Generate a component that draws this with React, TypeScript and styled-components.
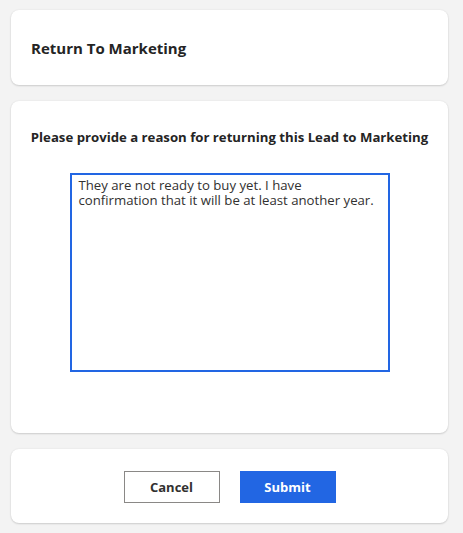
import styled, { createGlobalStyle } from "styled-components";

const GlobalStyle = createGlobalStyle`
  html, body {
    margin: 0;
    padding: 0;
    background: #f3f3f3;
    font-family: "Open Sans", "Noto Sans", sans-serif;
    color: #323130;
  }
`;

const Page = styled.div`
  display: flex;
  flex-direction: column;
  gap: 16px;
  padding: 10px 15px 10px 11px;
`;

const Card = styled.section<{ $height: number }>`
  background: #ffffff;
  border-radius: 8px;
  box-shadow: 0 1px 2px rgba(0, 0, 0, 0.14), 0 0 2px rgba(0, 0, 0, 0.08);
  height: ${(p) => p.$height}px;
  box-sizing: border-box;
`;

const HeaderCard = styled(Card)`
  display: flex;
  align-items: center;
  padding: 0 20px;
`;

const Title = styled.h1`
  margin: 0;
  font-size: 15px;
  font-weight: 700;
  color: #242424;
`;

const BodyCard = styled(Card)`
  display: flex;
  flex-direction: column;
  align-items: center;
  padding-top: 27px;
`;

const Prompt = styled.h2`
  margin: 0 0 27px;
  font-size: 13.2px;
  font-weight: 700;
  color: #242424;
`;

const Reason = styled.textarea`
  width: 320px;
  height: 199px;
  box-sizing: border-box;
  border: 2px solid #2266e3;
  border-radius: 0;
  padding: 3px 5px 3px 7px;
  font-family: inherit;
  font-size: 13.2px;
  line-height: 15px;
  color: #323130;
  resize: none;
  outline: none;
`;

const FooterCard = styled(Card)`
  display: flex;
  justify-content: center;
  align-items: center;
  gap: 20px;
  padding-top: 2px;
`;

const Button = styled.button<{ $primary?: boolean }>`
  width: 96px;
  height: 32px;
  box-sizing: border-box;
  font-family: inherit;
  font-size: 13px;
  font-weight: 700;
  cursor: pointer;
  border: 1px solid ${(p) => (p.$primary ? "#2266e3" : "#8a8886")};
  background: ${(p) => (p.$primary ? "#2266e3" : "#ffffff")};
  color: ${(p) => (p.$primary ? "#ffffff" : "#323130")};
`;

export default function App() {
  return (
    <>
      <GlobalStyle />
      <Page>
        <HeaderCard $height={75}>
          <Title>Return To Marketing</Title>
        </HeaderCard>
        <BodyCard $height={332}>
          <Prompt>Please provide a reason for returning this Lead to Marketing</Prompt>
          <Reason
            defaultValue={
              "They are not ready to buy yet. I have\nconfirmation that it will be at least another year."
            }
          />
        </BodyCard>
        <FooterCard $height={74}>
          <Button>Cancel</Button>
          <Button $primary>Submit</Button>
        </FooterCard>
      </Page>
    </>
  );
}
